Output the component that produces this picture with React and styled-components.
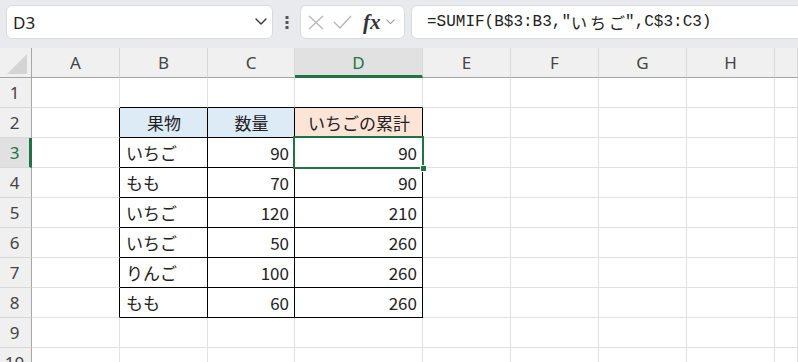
import React from "react";
import styled, { createGlobalStyle } from "styled-components";

const Global = createGlobalStyle`
  html, body { margin: 0; padding: 0; background: #fff; }
  body { overflow: hidden; }
`;

const Page = styled.div`
  width: 798px;
  height: 362px;
  overflow: hidden;
  background: #fff;
  font-family: "Noto Sans CJK JP", "Noto Sans", sans-serif;
`;

const Toolbar = styled.div`
  height: 48px;
  box-sizing: border-box;
  background: #e8eaed;
  display: flex;
  align-items: flex-start;
  padding: 5px 0 0 6px;
`;

const Box = styled.div`
  height: 34px;
  box-sizing: border-box;
  background: #fff;
  border: 1px solid #d9dbde;
  border-radius: 6px;
  display: flex;
  align-items: center;
`;

const NameBox = styled(Box)`
  width: 267px;
  padding: 0 5px 0 6px;
  justify-content: space-between;
  font-family: "Noto Sans", sans-serif;
  font-size: 17px;
  color: #222;
`;

const Dots = styled.div`
  width: 27px;
  height: 34px;
  display: flex;
  align-items: center;
  justify-content: center;
`;

const FxBox = styled(Box)`
  width: 105px;
  padding: 0 6px 0 7px;
  gap: 9px;
`;

const FxText = styled.span`
  font-family: "Liberation Serif", serif;
  font-style: italic;
  font-weight: bold;
  font-size: 21px;
  color: #333;
  margin-left: 2px;
  margin-right: -4px;
  line-height: 1;
`;

const FormulaBox = styled(Box)`
  flex: 1;
  margin-left: 6px;
  margin-right: -12px;
  padding-left: 15px;
  font-family: "Liberation Mono", "Noto Sans CJK JP", monospace;
  font-size: 16px;
  color: #222;
  white-space: pre;
`;

const Jp = styled.span`
  font-family: "Noto Sans CJK JP", sans-serif;
  letter-spacing: 3px;
  margin-right: -3px;
`;

const Sheet = styled.div`
  display: grid;
  grid-template-columns: 32px 88px 88px 87px 128px 88px 88px 88px 88px 1fr;
  grid-auto-rows: 30px;
`;

const Corner = styled.div`
  background: #f0f0f0;
  border-right: 1px solid #a6a6a6;
  border-bottom: 1px solid #a6a6a6;
  box-sizing: border-box;
  position: relative;
  &::after {
    content: "";
    position: absolute;
    right: 4px;
    bottom: 3px;
    width: 0;
    height: 0;
    border-left: 20px solid transparent;
    border-bottom: 20px solid #d4d4d4;
  }
`;

const ColHead = styled.div`
  background: ${(p) => (p.$active ? "#e1e1e1" : "#f0f0f0")};
  border-right: 1px solid #d8d8d8;
  border-bottom: ${(p) => (p.$active ? "3px solid #217346" : "1px solid #a6a6a6")};
  box-sizing: border-box;
  display: flex;
  align-items: center;
  justify-content: center;
  padding-top: ${(p) => (p.$active ? "2px" : "0")};
  font-family: "Noto Sans", sans-serif;
  font-size: 17px;
  color: ${(p) => (p.$active ? "#217346" : "#444")};
`;

const RowHead = styled.div`
  background: ${(p) => (p.$active ? "#e1e1e1" : "#f0f0f0")};
  border-right: ${(p) => (p.$active ? "3px solid #217346" : "1px solid #a6a6a6")};
  border-bottom: 1px solid #d8d8d8;
  box-sizing: border-box;
  display: flex;
  align-items: center;
  justify-content: center;
  padding-right: ${(p) => (p.$active ? "0" : "2px")};
  font-family: "Noto Sans", sans-serif;
  font-size: 17px;
  color: ${(p) => (p.$active ? "#217346" : "#444")};
`;

const Cell = styled.div`
  box-sizing: border-box;
  border-right: 1px solid ${(p) => (p.$br ? "#000" : "#e1e1e1")};
  border-bottom: 1px solid ${(p) => (p.$bb ? "#000" : "#e1e1e1")};
  background: ${(p) => p.$bg || "#fff"};
  display: flex;
  align-items: center;
  justify-content: ${(p) =>
    p.$align === "right" ? "flex-end" : p.$align === "center" ? "center" : "flex-start"};
  padding: 0 5px 0 6px;
  font-size: 17px;
  color: #222;
  white-space: nowrap;
  overflow: visible;
  position: relative;
`;

const Selection = styled.div`
  position: absolute;
  z-index: 5;
  left: -2px;
  top: -2px;
  right: -2px;
  bottom: -2px;
  border: 2px solid #217346;
  pointer-events: none;
  &::after {
    content: "";
    position: absolute;
    right: -5px;
    bottom: -5px;
    width: 5px;
    height: 5px;
    background: #217346;
    border: 1px solid #fff;
  }
`;

const cols = ["A", "B", "C", "D", "E", "F", "G", "H", ""];

const data = [
  ["いちご", "90", "90"],
  ["もも", "70", "90"],
  ["いちご", "120", "210"],
  ["いちご", "50", "260"],
  ["りんご", "100", "260"],
  ["もも", "60", "260"],
];

function Chevron({ size = 12, color = "#333" }) {
  return (
    <svg width={size} height={size * 0.6} viewBox="0 0 12 7" fill="none">
      <path d="M1 1l5 5 5-5" stroke={color} strokeWidth="1.4" strokeLinecap="round" strokeLinejoin="round" />
    </svg>
  );
}

function Row({ r }) {
  const cells = [];
  for (let c = 0; c < 9; c++) {
    const col = cols[c];
    let props = {};
    let content = null;
    const inTableRow = r >= 2 && r <= 8;
    if (col === "A" && inTableRow) props.$br = true;
    if (r === 1 && (col === "B" || col === "C" || col === "D")) props.$bb = true;
    if (inTableRow && (col === "B" || col === "C" || col === "D")) {
      props.$br = true;
      props.$bb = true;
      if (r === 2) {
        props.$align = "center";
        props.$bg = col === "D" ? "#fce4d6" : "#ddebf7";
        content = col === "B" ? "果物" : col === "C" ? "数量" : "いちごの累計";
      } else {
        const row = data[r - 3];
        if (col === "B") content = row[0];
        if (col === "C") {
          content = row[1];
          props.$align = "right";
        }
        if (col === "D") {
          content = row[2];
          props.$align = "right";
        }
      }
    }
    cells.push(
      <Cell key={c} {...props}>
        {content}
        {r === 3 && col === "D" && <Selection />}
      </Cell>
    );
  }
  return (
    <>
      <RowHead $active={r === 3}>{r}</RowHead>
      {cells}
    </>
  );
}

export default function App() {
  return (
    <Page>
      <Global />
      <Toolbar>
        <NameBox>
          <span>D3</span>
          <Chevron size={12} color="#333" />
        </NameBox>
        <Dots>
          <svg width="4" height="13" viewBox="0 0 4 13">
            <rect x="0.5" y="0" width="3" height="3" fill="#555" />
            <rect x="0.5" y="5" width="3" height="3" fill="#555" />
            <rect x="0.5" y="10" width="3" height="3" fill="#555" />
          </svg>
        </Dots>
        <FxBox>
          <svg width="16" height="15" viewBox="0 0 16 15" fill="none">
            <path d="M1 1l14 13M15 1L1 14" stroke="#b5b5b5" strokeWidth="1.3" />
          </svg>
          <svg width="19" height="14" viewBox="0 0 19 14" fill="none">
            <path d="M1 7l6 6L18 1" stroke="#b5b5b5" strokeWidth="1.3" />
          </svg>
          <FxText>fx</FxText>
          <Chevron size={9} color="#999" />
        </FxBox>
        <FormulaBox>
          =SUMIF(B$3:B3,"<Jp>いちご</Jp>",C$3:C3)
        </FormulaBox>
      </Toolbar>
      <Sheet>
        <Corner />
        {cols.map((c, i) => (
          <ColHead key={i} $active={c === "D"}>
            {c}
          </ColHead>
        ))}
        {Array.from({ length: 10 }, (_, i) => (
          <Row key={i} r={i + 1} />
        ))}
      </Sheet>
    </Page>
  );
}
